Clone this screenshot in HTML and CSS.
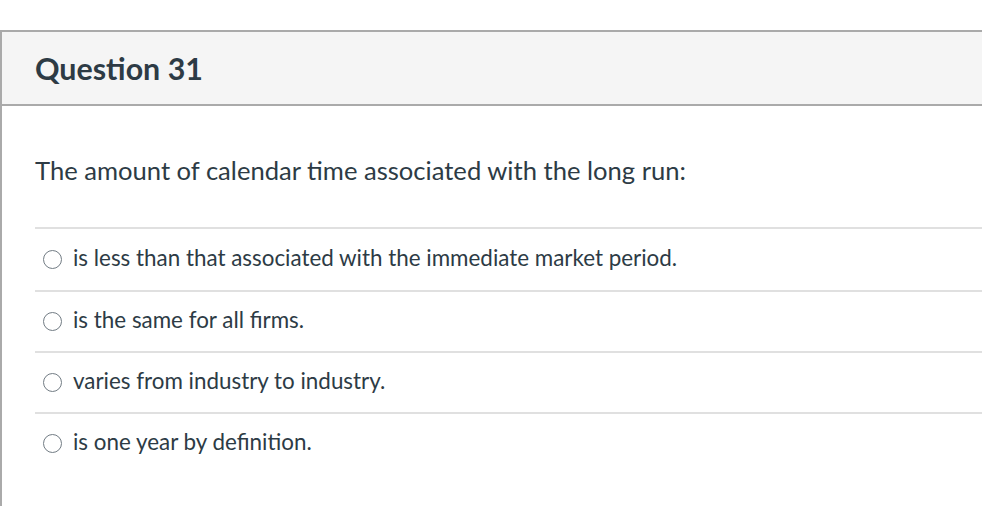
FILE: index.html
```html
<!DOCTYPE html>
<html>
<head>
<meta charset="utf-8">
<link rel="stylesheet" href="styles.css">
</head>
<body>
<div class="quiz">
  <div class="header"><h2 class="title">Question 31</h2></div>
  <div class="body">
    <p class="prompt">The amount of calendar time associated with the long run:</p>
    <div class="answers">
      <label class="answer"><span class="radio"></span><span class="text">is less than that associated with the immediate market period.</span></label>
      <label class="answer"><span class="radio"></span><span class="text">is the same for all firms.</span></label>
      <label class="answer"><span class="radio"></span><span class="text">varies from industry to industry.</span></label>
      <label class="answer"><span class="radio"></span><span class="text">is one year by definition.</span></label>
    </div>
  </div>
</div>
</body>
</html>
```
FILE: styles.css
```css
html, body {
  margin: 0;
  padding: 0;
  background: #fff;
}
body {
  font-family: Lato, "Noto Sans", sans-serif;
  color: #2d3b45;
  overflow: hidden;
  height: 506px;
}
.quiz {
  margin-top: 30px;
  width: 1000px;
  border-top: 2px solid #aaaaaa;
  border-left: 2px solid #aaaaaa;
  height: 480px;
}
.header {
  background: #f5f5f5;
  border-bottom: 2px solid #aaaaaa;
  height: 72px;
  display: flex;
  align-items: center;
  padding-left: 33px;
}
.title {
  margin: 0;
  font-size: 30.4px;
  font-weight: 700;
  color: #2d3b45;
}
.body {
  padding: 0 0 0 33px;
}
.prompt {
  margin: 0;
  padding-top: 49px;
  height: 72px;
  font-size: 25.6px;
  line-height: 30px;
  border-bottom: 2px solid #e0e0e0;
  box-sizing: content-box;
}
.answers {
  display: flex;
  flex-direction: column;
}
.answer {
  display: flex;
  align-items: center;
  height: 59px;
  border-bottom: 2px solid #e0e0e0;
  font-size: 22.4px;
  line-height: 28px;
}
.answer:first-child {
  height: 61px;
}
.answer:last-child {
  border-bottom: none;
}
.text {
  padding-bottom: 3px;
}
.radio {
  width: 17px;
  height: 17px;
  border: 1.5px solid #727c84;
  border-radius: 50%;
  margin-left: 8px;
  margin-right: 11px;
  flex: none;
}
```
